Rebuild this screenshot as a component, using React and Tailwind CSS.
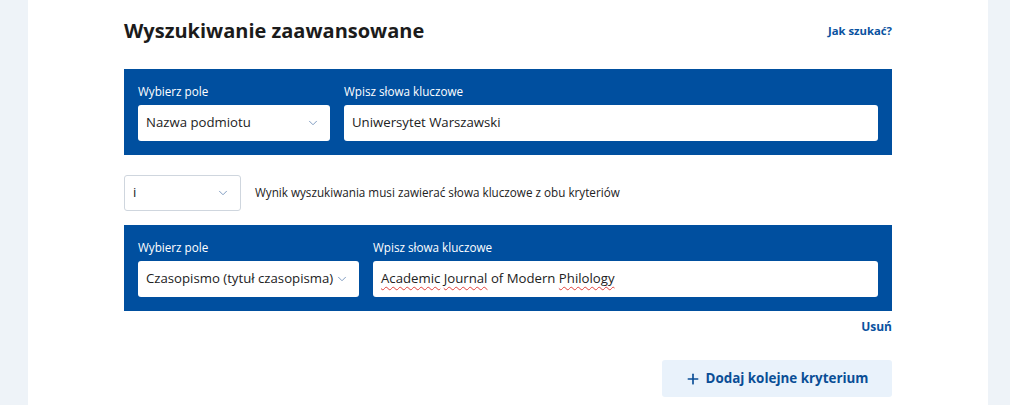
import { ChevronDown, Plus } from 'lucide-react';

const FONT = { fontFamily: '"Open Sans", "Noto Sans", sans-serif' };

function SelectBox({ value, width }) {
  return (
    <div className={`flex h-9 items-center justify-between rounded-[3px] bg-white pl-2 pr-2.5 ${width}`}>
      <span className="whitespace-nowrap text-[13.2px] text-[#222]">{value}</span>
      <ChevronDown className="h-3.5 w-3.5 shrink-0 text-[#6f8fb8]" strokeWidth={1.5} />
    </div>
  );
}

function Typo({ children }) {
  return (
    <span className="underline decoration-wavy decoration-[#e0403a] decoration-1 underline-offset-[3px]">{children}</span>
  );
}

function Criterion({ field, fieldWidth, children }) {
  return (
    <div className="flex gap-[14px] bg-[#004f9f] px-[14px] pt-[13px] pb-[14px]">
      <div className="flex flex-col">
        <span className="mb-[5px] text-[11.7px] leading-[18px] text-white">Wybierz pole</span>
        <SelectBox value={field} width={fieldWidth} />
      </div>
      <div className="flex flex-1 flex-col">
        <span className="mb-[5px] text-[11.7px] leading-[18px] text-white">Wpisz słowa kluczowe</span>
        <div className="flex h-9 items-center rounded-[3px] bg-white px-2 text-[13.2px] text-[#222]">{children}</div>
      </div>
    </div>
  );
}

export default function App() {
  return (
    <div className="flex h-[405px] w-[1010px] bg-[#eef3f8]" style={FONT}>
      <div className="ml-[28px] w-[960px] bg-white px-[96px]">
        <div className="flex items-center justify-between pt-[16px] pb-[23px]">
          <h1 className="text-[20px] font-bold leading-[30px] text-[#1b1b1b]">Wyszukiwanie zaawansowane</h1>
          <a className="text-[11.3px] font-bold text-[#0a52a0]">Jak szukać?</a>
        </div>

        <Criterion field="Nazwa podmiotu" fieldWidth="w-[192px]">Uniwersytet Warszawski</Criterion>

        <div className="flex items-center gap-[14px] pt-5 pb-[14px]">
          <div className="flex h-9 w-[117px] items-center justify-between rounded-[3px] border border-[#cfd6de] bg-white pl-2 pr-2.5">
            <span className="text-[13.2px] text-[#222]">i</span>
            <ChevronDown className="h-3.5 w-3.5 text-[#6f8fb8]" strokeWidth={1.5} />
          </div>
          <span className="text-[11.7px] text-[#222]">Wynik wyszukiwania musi zawierać słowa kluczowe z obu kryteriów</span>
        </div>

        <Criterion field="Czasopismo (tytuł czasopisma)" fieldWidth="w-[221px]">
          <span>
            <Typo>Academic</Typo> <Typo>Journal</Typo> of Modern <Typo>Philology</Typo>
          </span>
        </Criterion>

        <div className="flex justify-end pt-[7px]">
          <a className="text-[12px] font-bold text-[#0a52a0]">Usuń</a>
        </div>

        <div className="flex justify-end pt-[24px]">
          <button className="flex h-[37px] w-[230px] items-center justify-center gap-1 rounded-[3px] bg-[#e9f2fb] text-[13.4px] font-bold text-[#0a4e96]">
            <Plus className="h-4 w-4" strokeWidth={2.5} />
            Dodaj kolejne kryterium
          </button>
        </div>
      </div>
    </div>
  );
}
